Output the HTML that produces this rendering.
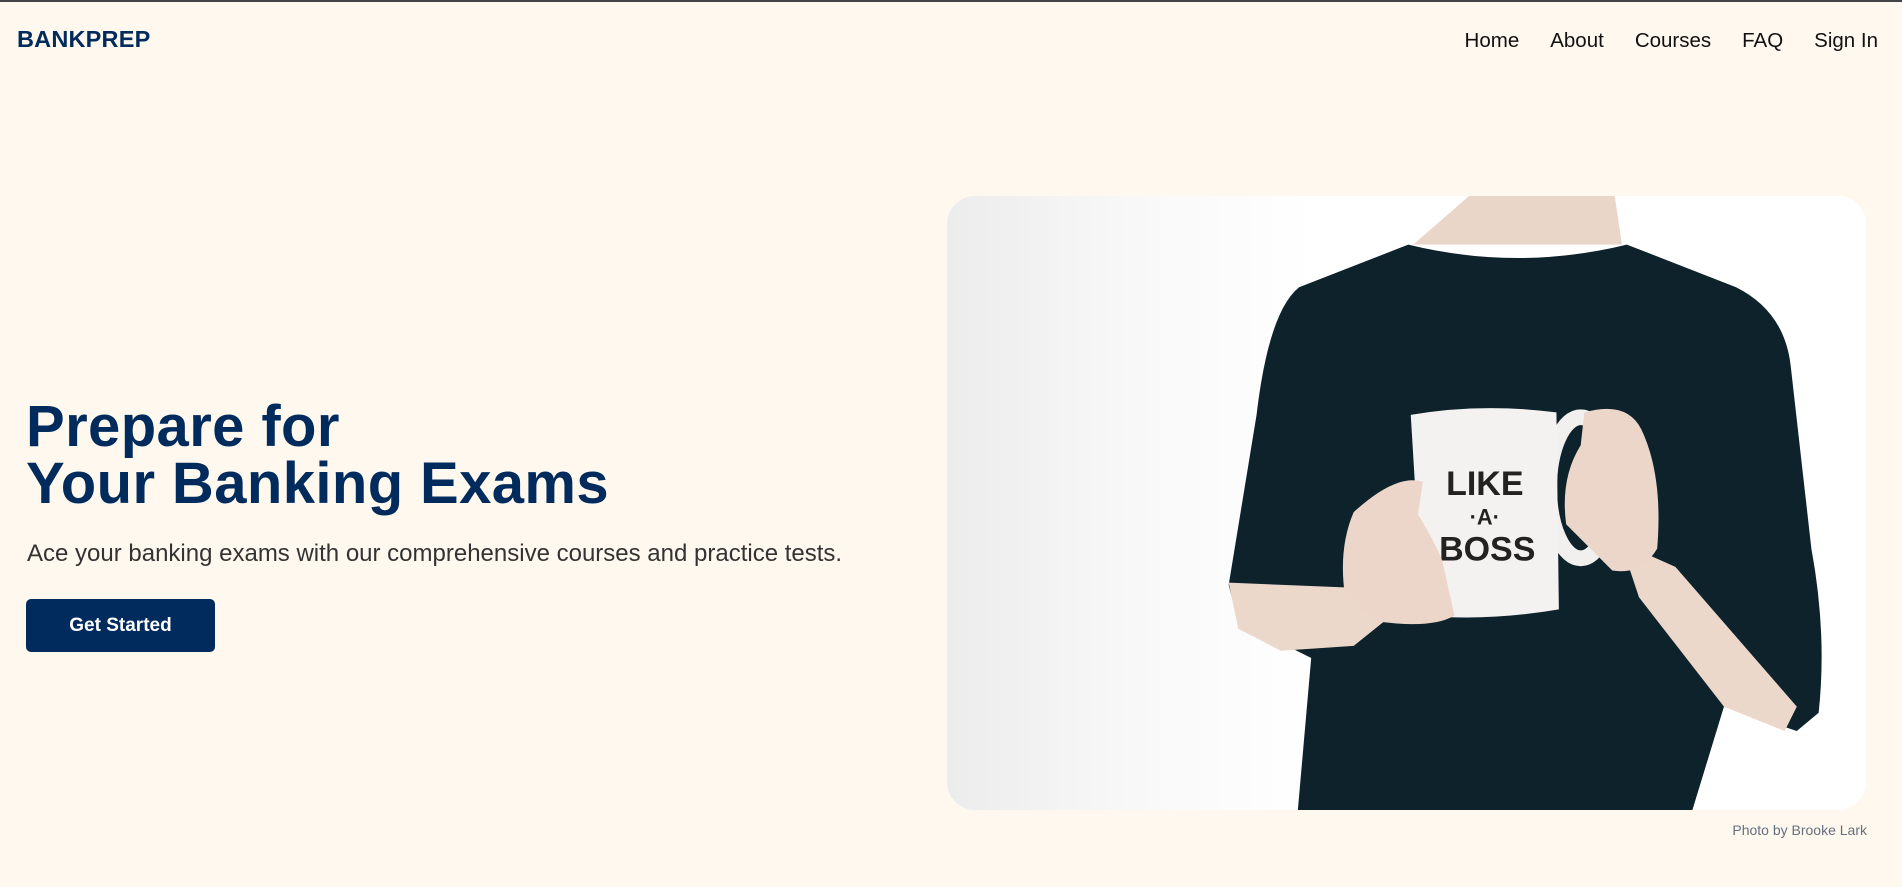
<!DOCTYPE html>
<html><head><meta charset="utf-8"><style>
*{margin:0;padding:0;box-sizing:border-box}
html,body{width:1902px;height:887px;overflow:hidden;background:#fff8ee;font-family:"Liberation Sans",sans-serif}
.topbar{position:absolute;left:0;top:0;width:1902px;height:2px;background:#47434a}
.logo{position:absolute;left:17px;top:26px;font-size:23.5px;font-weight:bold;color:#002b5c;letter-spacing:0.2px}
.nav{position:absolute;top:29px;right:24px;display:flex;gap:31px;font-size:20.5px;color:#111}
h1{position:absolute;left:26px;top:398px;font-size:58px;line-height:57px;color:#002b5c;font-weight:bold;letter-spacing:0.4px}
p.sub{position:absolute;left:27px;top:540px;font-size:24px;color:#333;}
.btn{position:absolute;left:26px;top:599px;width:189px;height:53px;background:#002b5c;border-radius:5px;color:#fff;font-size:19px;font-weight:bold;display:flex;align-items:center;justify-content:center}
.img{position:absolute;left:947px;top:196px;width:919px;height:614px;border-radius:28px;overflow:hidden;background:#fff}
.cap{position:absolute;right:35px;top:822px;font-size:14px;color:#667080}
</style></head><body>
<div class="topbar"></div>
<div class="logo">BANKPREP</div>
<div class="nav"><span>Home</span><span>About</span><span>Courses</span><span>FAQ</span><span>Sign In</span></div>
<h1>Prepare for<br>Your Banking Exams</h1>
<p class="sub">Ace your banking exams with our comprehensive courses and practice tests.</p>
<div class="btn">Get Started</div>
<div class="img">
<svg width="919" height="614" viewBox="0 0 757 505" preserveAspectRatio="none">
<defs><linearGradient id="bg" x1="0" x2="1"><stop offset="0" stop-color="#ececec"/><stop offset="0.2" stop-color="#f8f8f8"/><stop offset="0.4" stop-color="#fff"/><stop offset="1" stop-color="#fff"/></linearGradient></defs>
<rect width="757" height="505" fill="url(#bg)"/>
<path d="M430,0 L550,0 L556,40 L384,40 Z" fill="#ead6c9"/>
<path d="M380,40 Q470,62 560,40 L650,75 Q690,95 695,140 L712,290 Q725,360 718,425 L700,440 L640,420 L614,505 L289,505 L300,380 L240,350 L232,320 L255,180 Q265,95 290,75 Z" fill="#0e222c"/>
<path d="M232,318 L330,322 L360,350 L335,370 L275,374 L240,356 Z" fill="#ecd7cb"/>
<path d="M555,285 L600,305 L700,420 L690,440 L640,420 L570,330 Z" fill="#ecd7cb"/>
<ellipse cx="522" cy="240" rx="26" ry="58" fill="none" stroke="#f2f0ee" stroke-width="13"/>
<path d="M382,180 Q440,170 502,178 L504,340 Q445,350 392,345 Z" fill="#f4f2f0"/>
<text x="443" y="246" text-anchor="middle" font-family="Liberation Sans" font-weight="bold" font-size="28" fill="#222">LIKE</text>
<text x="443" y="270" text-anchor="middle" font-family="Liberation Sans" font-weight="bold" font-size="18" fill="#222">·A·</text>
<text x="445" y="300" text-anchor="middle" font-family="Liberation Sans" font-weight="bold" font-size="28" fill="#222">BOSS</text>
<path d="M335,260 Q370,228 392,235 L388,262 Q402,285 408,300 L418,345 Q400,356 355,350 L328,330 Q322,290 335,260 Z" fill="#ecd6ca"/>
<path d="M525,178 Q560,168 572,192 Q590,230 585,290 Q572,312 548,308 L510,270 Q505,232 522,205 Z" fill="#ecd6ca"/>
</svg>
</div>
<div class="cap">Photo by Brooke Lark</div>
</body></html>
